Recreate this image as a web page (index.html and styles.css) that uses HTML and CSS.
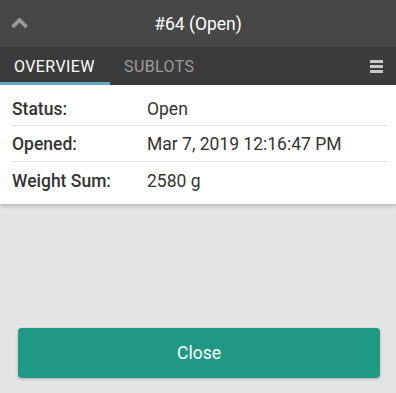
FILE: index.html
```html
<!doctype html>
<html lang="en">
  <head>
    <meta charset="UTF-8" />
    <meta name="viewport" content="width=device-width, initial-scale=1.0" />
    <title>#64 (Open)</title>
    <link rel="stylesheet" href="styles.css">
  </head>
  <body>
    <div class="page">
      <!-- Title bar -->
      <header class="title-bar">
        <span class="back-btn">
          <svg width="17" height="12" viewBox="0 0 17 12">
            <path d="M1.5 10 L8.5 3 L15.5 10" fill="none" stroke="#9b9b9b" stroke-width="3.6" />
          </svg>
        </span>
        <h1 class="title">#64 (Open)</h1>
      </header>

      <!-- Tabs -->
      <nav class="tab-bar">
        <span class="tab tab-active">Overview</span>
        <span class="tab">Sublots</span>
        <span class="menu-btn">
          <span></span>
          <span></span>
          <span></span>
        </span>
      </nav>

      <!-- Details -->
      <section class="details">
        <div class="row">
          <span class="label">Status:</span>
          <span class="value">Open</span>
        </div>
        <div class="row">
          <span class="label">Opened:</span>
          <span class="value">Mar 7, 2019 12:16:47 PM</span>
        </div>
        <div class="row">
          <span class="label">Weight Sum:</span>
          <span class="value">2580 g</span>
        </div>
      </section>

      <div class="spacer"></div>

      <footer class="actions">
        <button class="close-btn">Close</button>
      </footer>
    </div>
  </body>
</html>
```

FILE: styles.css
```css
html,
body {
  margin: 0;
  padding: 0;
  height: 100%;
}

body {
  background: #e4e4e4;
  font-family: Roboto, "Noto Sans", sans-serif;
  color: #333;
  -webkit-font-smoothing: antialiased;
}

.page {
  display: flex;
  flex-direction: column;
  height: 100%;
}

/* Title bar */
.title-bar {
  position: relative;
  height: 47px;
  background: #474747;
  display: flex;
  align-items: center;
  justify-content: center;
}

.back-btn {
  position: absolute;
  left: 11px;
  top: 17px;
  display: flex;
}

.title {
  margin: 0 0 -1px;
  font-size: 17.5px;
  font-weight: 400;
  color: #fff;
}

/* Tabs */
.tab-bar {
  height: 38px;
  background: #3b3b3b;
  display: flex;
  align-items: stretch;
}

.tab {
  display: flex;
  align-items: center;
  padding: 3px 13px 0 14px;
  font-size: 16px;
  letter-spacing: 0.4px;
  text-transform: uppercase;
  color: #9d9d9d;
  border-bottom: 3px solid transparent;
}

.tab-active {
  width: 83px;
  color: #fff;
  border-bottom-color: #62a9c6;
}

.menu-btn {
  margin-left: auto;
  margin-right: 13px;
  display: flex;
  flex-direction: column;
  justify-content: center;
  gap: 2px;
}

.menu-btn span {
  display: block;
  width: 13px;
  height: 3px;
  background: #c8c8c8;
}

/* Details */
.details {
  background: #fff;
  padding: 6px 9px 6px 12px;
  box-shadow: 0 2px 4px rgba(0, 0, 0, 0.22);
}

.row {
  display: flex;
  align-items: center;
  height: 35px;
  padding-top: 1px;
  box-sizing: border-box;
  font-size: 17.5px;
  border-bottom: 1px solid #e2e2e2;
}

.row + .row {
  height: 36px;
}

.row:last-child {
  border-bottom: none;
}

.label {
  width: 135px;
  font-weight: 500;
  color: #333;
}

.value {
  color: #333;
}

.spacer {
  flex: 1;
}

/* Footer */
.actions {
  padding: 0 16px 15px 18px;
}

.close-btn {
  display: block;
  width: 100%;
  height: 50px;
  border: none;
  border-radius: 4px;
  background: #209984;
  color: #fff;
  font-family: Roboto, "Noto Sans", sans-serif;
  font-size: 17.5px;
  box-shadow: 0 1px 3px rgba(0, 0, 0, 0.25);
}
```
